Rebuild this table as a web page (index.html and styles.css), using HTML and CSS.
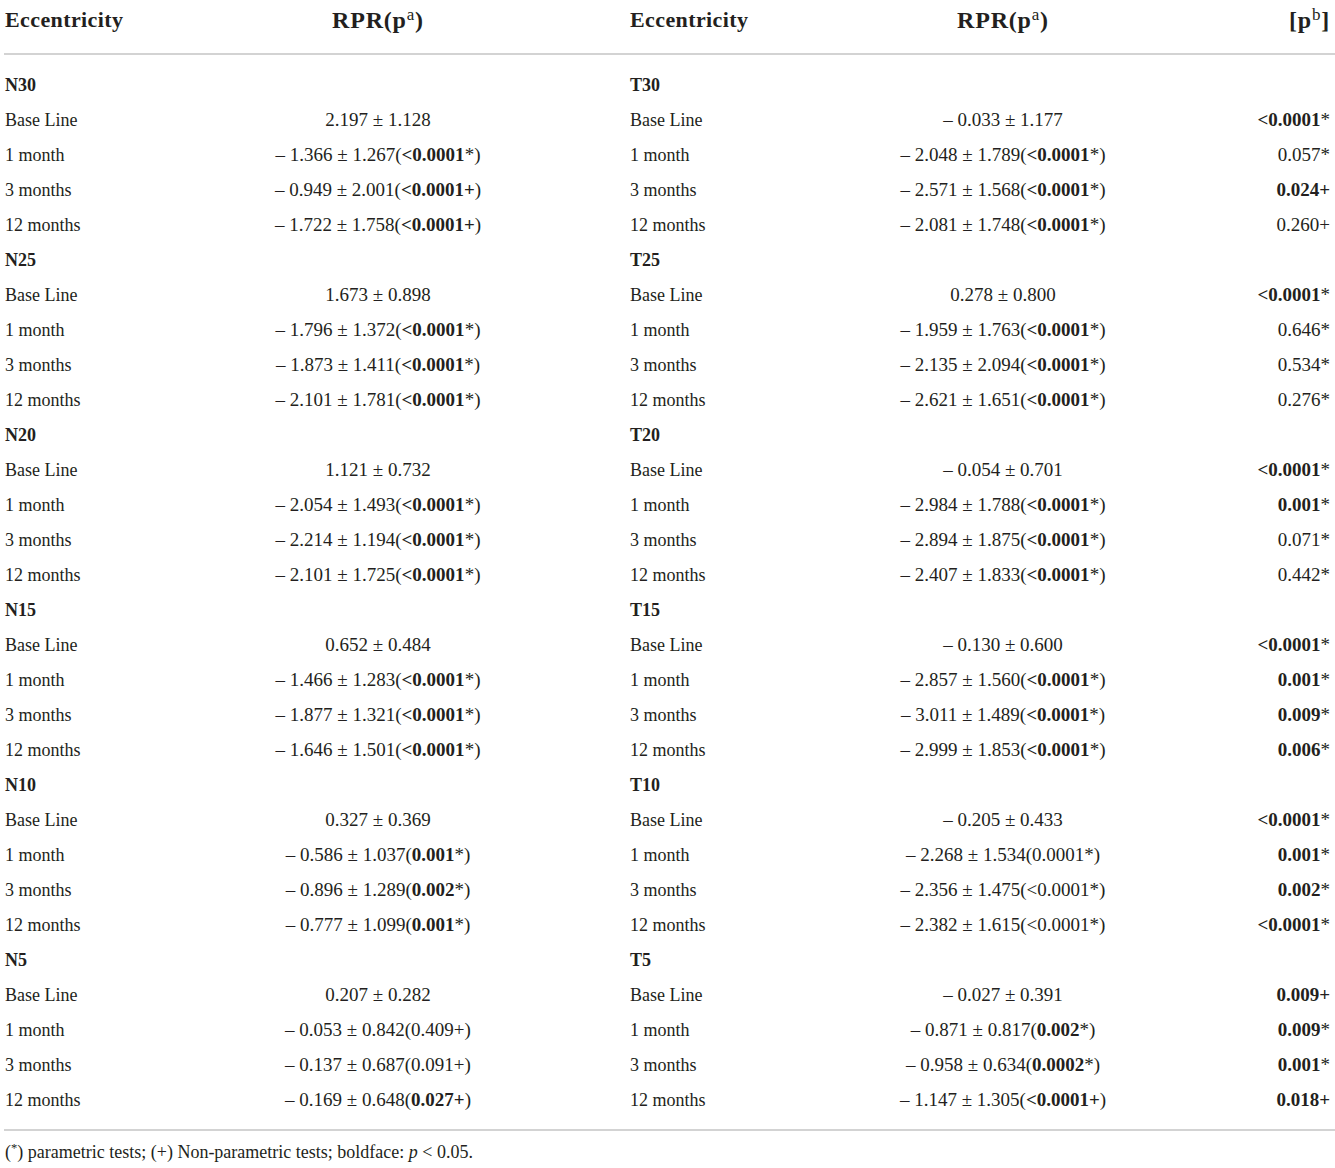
FILE: index.html
```html
<!DOCTYPE html>
<html lang="en">

<head>
    <meta charset="UTF-8">
    <title>RPR by eccentricity</title>
    <link rel="stylesheet" href="styles.css">
</head>

<body>
    <div class="page">
        <table class="rpr-table">
            <colgroup>
                <col class="c-label">
                <col class="c-val">
                <col class="c-label2">
                <col class="c-val2">
                <col class="c-p">
            </colgroup>
            <thead>
                <tr>
                    <th class="label">Eccentricity</th>
                    <th class="val">RPR(p<sup>a</sup>)</th>
                    <th class="label2">Eccentricity</th>
                    <th class="val">RPR(p<sup>a</sup>)</th>
                    <th class="p">[p<sup>b</sup>]</th>
                </tr>
            </thead>
            <tbody>
                <tr class="group first">
                    <td class="label">N30</td><td></td><td class="label2">T30</td><td></td><td></td>
                </tr>
                <tr>
                    <td class="label">Base Line</td><td class="val">2.197 ± 1.128</td>
                    <td class="label2">Base Line</td><td class="val">– 0.033 ± 1.177</td>
                    <td class="p"><b>&lt;0.0001</b>*</td>
                </tr>
                <tr>
                    <td class="label">1 month</td><td class="val">– 1.366 ± 1.267(<b>&lt;0.0001</b>*)</td>
                    <td class="label2">1 month</td><td class="val">– 2.048 ± 1.789(<b>&lt;0.0001</b>*)</td>
                    <td class="p">0.057*</td>
                </tr>
                <tr>
                    <td class="label">3 months</td><td class="val">– 0.949 ± 2.001(<b>&lt;0.0001+</b>)</td>
                    <td class="label2">3 months</td><td class="val">– 2.571 ± 1.568(<b>&lt;0.0001</b>*)</td>
                    <td class="p"><b>0.024+</b></td>
                </tr>
                <tr>
                    <td class="label">12 months</td><td class="val">– 1.722 ± 1.758(<b>&lt;0.0001+</b>)</td>
                    <td class="label2">12 months</td><td class="val">– 2.081 ± 1.748(<b>&lt;0.0001</b>*)</td>
                    <td class="p">0.260+</td>
                </tr>

                <tr class="group">
                    <td class="label">N25</td><td></td><td class="label2">T25</td><td></td><td></td>
                </tr>
                <tr>
                    <td class="label">Base Line</td><td class="val">1.673 ± 0.898</td>
                    <td class="label2">Base Line</td><td class="val">0.278 ± 0.800</td>
                    <td class="p"><b>&lt;0.0001</b>*</td>
                </tr>
                <tr>
                    <td class="label">1 month</td><td class="val">– 1.796 ± 1.372(<b>&lt;0.0001</b>*)</td>
                    <td class="label2">1 month</td><td class="val">– 1.959 ± 1.763(<b>&lt;0.0001</b>*)</td>
                    <td class="p">0.646*</td>
                </tr>
                <tr>
                    <td class="label">3 months</td><td class="val">– 1.873 ± 1.411(<b>&lt;0.0001</b>*)</td>
                    <td class="label2">3 months</td><td class="val">– 2.135 ± 2.094(<b>&lt;0.0001</b>*)</td>
                    <td class="p">0.534*</td>
                </tr>
                <tr>
                    <td class="label">12 months</td><td class="val">– 2.101 ± 1.781(<b>&lt;0.0001</b>*)</td>
                    <td class="label2">12 months</td><td class="val">– 2.621 ± 1.651(<b>&lt;0.0001</b>*)</td>
                    <td class="p">0.276*</td>
                </tr>

                <tr class="group">
                    <td class="label">N20</td><td></td><td class="label2">T20</td><td></td><td></td>
                </tr>
                <tr>
                    <td class="label">Base Line</td><td class="val">1.121 ± 0.732</td>
                    <td class="label2">Base Line</td><td class="val">– 0.054 ± 0.701</td>
                    <td class="p"><b>&lt;0.0001</b>*</td>
                </tr>
                <tr>
                    <td class="label">1 month</td><td class="val">– 2.054 ± 1.493(<b>&lt;0.0001</b>*)</td>
                    <td class="label2">1 month</td><td class="val">– 2.984 ± 1.788(<b>&lt;0.0001</b>*)</td>
                    <td class="p"><b>0.001</b>*</td>
                </tr>
                <tr>
                    <td class="label">3 months</td><td class="val">– 2.214 ± 1.194(<b>&lt;0.0001</b>*)</td>
                    <td class="label2">3 months</td><td class="val">– 2.894 ± 1.875(<b>&lt;0.0001</b>*)</td>
                    <td class="p">0.071*</td>
                </tr>
                <tr>
                    <td class="label">12 months</td><td class="val">– 2.101 ± 1.725(<b>&lt;0.0001</b>*)</td>
                    <td class="label2">12 months</td><td class="val">– 2.407 ± 1.833(<b>&lt;0.0001</b>*)</td>
                    <td class="p">0.442*</td>
                </tr>

                <tr class="group">
                    <td class="label">N15</td><td></td><td class="label2">T15</td><td></td><td></td>
                </tr>
                <tr>
                    <td class="label">Base Line</td><td class="val">0.652 ± 0.484</td>
                    <td class="label2">Base Line</td><td class="val">– 0.130 ± 0.600</td>
                    <td class="p"><b>&lt;0.0001</b>*</td>
                </tr>
                <tr>
                    <td class="label">1 month</td><td class="val">– 1.466 ± 1.283(<b>&lt;0.0001</b>*)</td>
                    <td class="label2">1 month</td><td class="val">– 2.857 ± 1.560(<b>&lt;0.0001</b>*)</td>
                    <td class="p"><b>0.001</b>*</td>
                </tr>
                <tr>
                    <td class="label">3 months</td><td class="val">– 1.877 ± 1.321(<b>&lt;0.0001</b>*)</td>
                    <td class="label2">3 months</td><td class="val">– 3.011 ± 1.489(<b>&lt;0.0001</b>*)</td>
                    <td class="p"><b>0.009</b>*</td>
                </tr>
                <tr>
                    <td class="label">12 months</td><td class="val">– 1.646 ± 1.501(<b>&lt;0.0001</b>*)</td>
                    <td class="label2">12 months</td><td class="val">– 2.999 ± 1.853(<b>&lt;0.0001</b>*)</td>
                    <td class="p"><b>0.006</b>*</td>
                </tr>

                <tr class="group">
                    <td class="label">N10</td><td></td><td class="label2">T10</td><td></td><td></td>
                </tr>
                <tr>
                    <td class="label">Base Line</td><td class="val">0.327 ± 0.369</td>
                    <td class="label2">Base Line</td><td class="val">– 0.205 ± 0.433</td>
                    <td class="p"><b>&lt;0.0001</b>*</td>
                </tr>
                <tr>
                    <td class="label">1 month</td><td class="val">– 0.586 ± 1.037(<b>0.001</b>*)</td>
                    <td class="label2">1 month</td><td class="val">– 2.268 ± 1.534(0.0001*)</td>
                    <td class="p"><b>0.001</b>*</td>
                </tr>
                <tr>
                    <td class="label">3 months</td><td class="val">– 0.896 ± 1.289(<b>0.002</b>*)</td>
                    <td class="label2">3 months</td><td class="val">– 2.356 ± 1.475(&lt;0.0001*)</td>
                    <td class="p"><b>0.002</b>*</td>
                </tr>
                <tr>
                    <td class="label">12 months</td><td class="val">– 0.777 ± 1.099(<b>0.001</b>*)</td>
                    <td class="label2">12 months</td><td class="val">– 2.382 ± 1.615(&lt;0.0001*)</td>
                    <td class="p"><b>&lt;0.0001</b>*</td>
                </tr>

                <tr class="group">
                    <td class="label">N5</td><td></td><td class="label2">T5</td><td></td><td></td>
                </tr>
                <tr>
                    <td class="label">Base Line</td><td class="val">0.207 ± 0.282</td>
                    <td class="label2">Base Line</td><td class="val">– 0.027 ± 0.391</td>
                    <td class="p"><b>0.009+</b></td>
                </tr>
                <tr>
                    <td class="label">1 month</td><td class="val">– 0.053 ± 0.842(0.409+)</td>
                    <td class="label2">1 month</td><td class="val">– 0.871 ± 0.817(<b>0.002</b>*)</td>
                    <td class="p"><b>0.009</b>*</td>
                </tr>
                <tr>
                    <td class="label">3 months</td><td class="val">– 0.137 ± 0.687(0.091+)</td>
                    <td class="label2">3 months</td><td class="val">– 0.958 ± 0.634(<b>0.0002</b>*)</td>
                    <td class="p"><b>0.001</b>*</td>
                </tr>
                <tr class="last">
                    <td class="label">12 months</td><td class="val">– 0.169 ± 0.648(<b>0.027+</b>)</td>
                    <td class="label2">12 months</td><td class="val">– 1.147 ± 1.305(<b>&lt;0.0001+</b>)</td>
                    <td class="p"><b>0.018+</b></td>
                </tr>
            </tbody>
        </table>

        <p class="note">(<sup>*</sup>) parametric tests; (+) Non-parametric tests; boldface: <i>p</i> &lt; 0.05.</p>
    </div>
</body>

</html>
```

FILE: styles.css
```css
body {
    margin: 0;
    padding: 0;
    background: #fff;
    color: #231f20;
    font-family: 'Liberation Serif', 'Times New Roman', serif;
}

sup {
    font-size: 70%;
    line-height: 0;
    position: relative;
    vertical-align: baseline;
    top: -0.5em;
}

.page {
    padding-left: 4px;
}

.rpr-table {
    width: 1331px;
    border-collapse: collapse;
    table-layout: fixed;
    font-size: 18px;
}

.c-label { width: 126px; }
.c-val { width: 496px; }
.c-label2 { width: 130px; }
.c-val2 { width: 494px; }
.c-p { width: 85px; }

.rpr-table th {
    font-size: 22px;
    font-weight: bold;
    letter-spacing: 0.4px;
    line-height: 24px;
    padding: 8px 0 21px;
    border-bottom: 2px solid #d3d3d3;
    white-space: nowrap;
}

.rpr-table th.val,
.rpr-table th.p {
    font-size: 24px;
    letter-spacing: 0.8px;
}

.rpr-table th sup {
    font-weight: normal;
    font-size: 17px;
    top: -0.45em;
}

.rpr-table td {
    height: 35px;
    padding: 0;
    line-height: 20px;
    white-space: nowrap;
}

.rpr-table td.val,
.rpr-table td.p {
    font-size: 19px;
}

.rpr-table tr.first td {
    padding-top: 12px;
}

.rpr-table tr.last td {
    padding-bottom: 12px;
}

.rpr-table tbody {
    border-bottom: 2px solid #d3d3d3;
}

.label {
    text-align: left;
    padding-left: 1px !important;
}

.label2 {
    text-align: left;
    padding-left: 4px !important;
}

.val {
    text-align: center;
}

.p {
    text-align: right;
    padding-right: 5px !important;
}

.group td {
    font-weight: bold;
}

.note {
    margin: 0;
    padding: 11px 0 0 1px;
    font-size: 18px;
    line-height: 20px;
}
```
